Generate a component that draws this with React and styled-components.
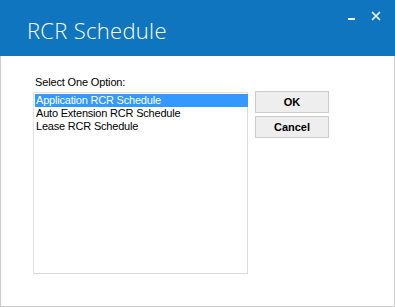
import React, { useState } from "react";
import styled, { createGlobalStyle } from "styled-components";

const GlobalStyle = createGlobalStyle`
  html, body {
    margin: 0;
    padding: 0;
    background: #ffffff;
  }
  body {
    width: 395px;
    height: 307px;
    overflow: hidden;
    font-family: "Liberation Sans", Arial, sans-serif;
  }
`;

const Window = styled.div`
  width: 395px;
  height: 307px;
  display: flex;
  flex-direction: column;
  box-sizing: border-box;
`;

const TitleBar = styled.div`
  height: 56px;
  flex-shrink: 0;
  background: #1075bf;
  display: flex;
  align-items: flex-start;
  justify-content: space-between;
`;

const Title = styled.h1`
  margin: 16px 0 0 27px;
  font-family: "Open Sans", "Noto Sans", sans-serif;
  font-weight: 300;
  font-size: 22px;
  line-height: 28px;
  color: #ffffff;
  letter-spacing: 0.3px;
`;

const Controls = styled.div`
  display: flex;
  align-items: flex-start;
  padding: 11px 7px 0 0;
`;

const ControlButton = styled.button`
  width: 24px;
  height: 10px;
  padding: 0;
  border: none;
  background: transparent;
  display: flex;
  align-items: flex-start;
  justify-content: center;
  cursor: pointer;
`;

const Body = styled.div`
  flex: 1;
  border: 1px solid #cccccc;
  border-top: none;
  padding: 20px 0 0 32px;
  display: flex;
  flex-direction: column;
`;

const Label = styled.div`
  font-size: 11px;
  line-height: 13px;
  letter-spacing: -0.15px;
  color: #000000;
  margin: 0 0 3px 2px;
`;

const Row = styled.div`
  display: flex;
  align-items: flex-start;
  gap: 7px;
`;

const ListBox = styled.ul`
  list-style: none;
  margin: 0;
  padding: 1px 0 0 1px;
  width: 215px;
  height: 182px;
  box-sizing: border-box;
  border: 1px solid #e3e3e3;
  border-right-color: #dadada;
  border-bottom-color: #dadada;
`;

const Item = styled.li`
  height: 13px;
  line-height: 12px;
  font-size: 11px;
  letter-spacing: -0.2px;
  padding-left: 1px;
  width: 213px;
  box-sizing: border-box;
  white-space: nowrap;
  cursor: default;
  color: ${({ selected }) => (selected ? "#ffffff" : "#000000")};
  background: ${({ selected }) => (selected ? "#3399ff" : "transparent")};
`;

const ButtonColumn = styled.div`
  display: flex;
  flex-direction: column;
  gap: 3px;
  margin-top: -1px;
`;

const DialogButton = styled.button`
  width: 74px;
  height: 22px;
  box-sizing: border-box;
  border: 1px solid #cccccc;
  background: #eeeeee;
  font-family: "Liberation Sans", Arial, sans-serif;
  font-size: 11px;
  font-weight: bold;
  color: #000000;
  padding: 0;
  cursor: pointer;
`;

const options = [
  "Application RCR Schedule",
  "Auto Extension RCR Schedule",
  "Lease RCR Schedule",
];

const App = () => {
  const [selected, setSelected] = useState(0);

  return (
    <>
      <GlobalStyle />
      <Window>
        <TitleBar>
          <Title>RCR Schedule</Title>
          <Controls>
            <ControlButton aria-label="Minimize">
              <svg width="8" height="10" viewBox="0 0 8 10">
                <rect x="0" y="7" width="7" height="2" fill="#ffffff" />
              </svg>
            </ControlButton>
            <ControlButton aria-label="Close">
              <svg width="10" height="10" viewBox="0 0 10 10">
                <path
                  d="M1 1 L9 9 M9 1 L1 9"
                  stroke="#ffffff"
                  strokeWidth="1.6"
                />
              </svg>
            </ControlButton>
          </Controls>
        </TitleBar>
        <Body>
          <Label>Select One Option:</Label>
          <Row>
            <ListBox>
              {options.map((opt, i) => (
                <Item
                  key={opt}
                  selected={i === selected}
                  onClick={() => setSelected(i)}
                >
                  {opt}
                </Item>
              ))}
            </ListBox>
            <ButtonColumn>
              <DialogButton>OK</DialogButton>
              <DialogButton>Cancel</DialogButton>
            </ButtonColumn>
          </Row>
        </Body>
      </Window>
    </>
  );
};

export default App;
